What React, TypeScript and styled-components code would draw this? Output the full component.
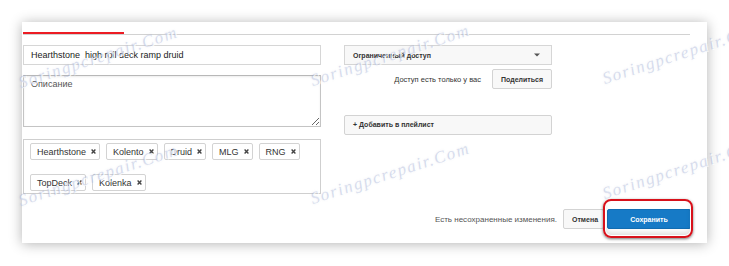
import React from "react";
import styled, { createGlobalStyle } from "styled-components";

const Global = createGlobalStyle`
  html, body { margin: 0; padding: 0; background: #fff; }
  body { font-family: "Liberation Sans", Arial, sans-serif; color: #222; }
  * { box-sizing: border-box; }
`;

const Page = styled.div`
  position: relative;
  width: 729px;
  height: 266px;
  padding: 22px 0 0 22px;
  overflow: hidden;
`;

const Card = styled.div`
  width: 685px;
  height: 221px;
  background: #fff;
  box-shadow: 0 1px 12px rgba(0, 0, 0, 0.3);
  padding: 10px 17px 0 1px;
  display: flex;
  flex-direction: column;
`;

const TabBar = styled.div`
  height: 3px;
  border-bottom: 1px solid #d2d2d2;
  display: flex;
`;

const TabIndicator = styled.div`
  width: 101px;
  height: 2px;
  background: #ec1c24;
`;

const Body = styled.div`
  margin-top: 10px;
  display: grid;
  grid-template-columns: 298px 208px;
  column-gap: 23px;
  align-items: start;
`;

const Column = styled.div`
  display: flex;
  flex-direction: column;
`;

const TitleInput = styled.input`
  height: 20px;
  width: 100%;
  border: 1px solid #d6d6d6;
  padding: 0 7px;
  font-family: inherit;
  font-size: 9px;
  color: #222;
  outline: none;
  background: #fff;
`;

const Description = styled.textarea`
  margin-top: 10px;
  height: 52px;
  width: 100%;
  border: 1px solid #c4c4c4;
  border-top-color: #b8b8b8;
  padding: 3px 7px;
  font-family: inherit;
  font-size: 9px;
  color: #222;
  outline: none;
  resize: vertical;
  box-shadow: inset 0 1px 2px rgba(0, 0, 0, 0.08);
  &::placeholder {
    color: #555;
  }
`;

const TagBox = styled.div`
  margin-top: 12px;
  height: 55px;
  border: 1px solid #cfcfcf;
  padding: 3px 6px;
  display: flex;
  flex-wrap: wrap;
  align-content: flex-start;
  column-gap: 6px;
  row-gap: 14px;
`;

const Chip = styled.span`
  height: 17px;
  display: inline-flex;
  align-items: center;
  gap: 5px;
  padding: 0 3px 0 6px;
  border: 1px solid #d3d3d3;
  border-radius: 2px;
  background: #fff;
  font-size: 9px;
  color: #333;
`;

const Select = styled.div`
  height: 20px;
  border: 1px solid #d6d6d6;
  background: #f8f8f8;
  padding: 0 11px 0 8px;
  display: flex;
  align-items: center;
  justify-content: space-between;
  font-size: 7px;
  font-weight: bold;
  color: #333;
`;

const ShareRow = styled.div`
  margin-top: 4px;
  display: flex;
  justify-content: flex-end;
  align-items: center;
  gap: 11px;
`;

const Note = styled.span<{ $size?: number }>`
  font-size: ${(p) => p.$size ?? 7.5}px;
  color: ${(p) => (p.$size ? "#555" : "#333")};
`;

const Button = styled.button<{ $w?: number; $primary?: boolean }>`
  height: 20px;
  width: ${(p) => (p.$w ? `${p.$w}px` : "100%")};
  padding: 0 8px;
  border: 1px solid ${(p) => (p.$primary ? "#126db3" : "#d3d3d3")};
  background: ${(p) => (p.$primary ? "#167ac6" : "#f8f8f8")};
  color: ${(p) => (p.$primary ? "#fff" : "#333")};
  font-family: inherit;
  font-size: 7px;
  font-weight: bold;
  border-radius: 2px;
  text-align: ${(p) => (p.$w ? "center" : "left")};
  cursor: pointer;
`;

const PlaylistWrap = styled.div`
  margin-top: 24px;
`;

const Footer = styled.div`
  margin-top: 15px;
  margin-right: -1px;
  display: flex;
  justify-content: flex-end;
  align-items: center;
`;

const FooterNote = styled(Note)`
  margin-right: 6px;
`;

const SaveWrap = styled.div`
  position: relative;
  margin-left: 3px;
  display: flex;
  &::after {
    content: "";
    position: absolute;
    top: -10px;
    bottom: -9px;
    left: -4px;
    right: -2px;
    border: 2.5px solid #d8111b;
    border-radius: 8px;
    box-shadow: 0 1px 3px rgba(0, 0, 0, 0.55), inset 0 0 0 1px #fff,
      inset 0 -4px 5px rgba(0, 0, 0, 0.12);
    pointer-events: none;
  }
`;

const Watermark = styled.span<{ $x: number; $y: number }>`
  position: absolute;
  left: ${(p) => p.$x}px;
  top: ${(p) => p.$y - 18}px;
  height: 18px;
  line-height: 18px;
  transform: rotate(-18deg);
  transform-origin: left bottom;
  font-family: "Liberation Serif", "Times New Roman", serif;
  font-style: italic;
  font-size: 17px;
  letter-spacing: 1.6px;
  color: rgba(150, 165, 210, 0.32);
  text-shadow: 1px 1px 0 rgba(255, 255, 255, 0.8), 0 0 2px rgba(160, 170, 200, 0.25);
  white-space: nowrap;
  pointer-events: none;
`;

const Arrow = () => (
  <svg width="6" height="4" viewBox="0 0 6 4">
    <path d="M0 0.5 L6 0.5 L3 3.5 Z" fill="#555" />
  </svg>
);

const Cross = () => (
  <svg width="5" height="5" viewBox="0 0 5 5">
    <path d="M0.6 0.6 L4.4 4.4 M4.4 0.6 L0.6 4.4" stroke="#444" strokeWidth="1.4" />
  </svg>
);

const tags = ["Hearthstone", "Kolento", "Druid", "MLG", "RNG", "TopDeck", "Kolenka"];

const marks = [
  [22, 92],
  [314, 90],
  [606, 88],
  [22, 210],
  [314, 208],
  [606, 203],
];

export default function App() {
  return (
    <>
      <Global />
      <Page>
        <Card>
          <TabBar>
            <TabIndicator />
          </TabBar>
          <Body>
            <Column>
              <TitleInput readOnly value="Hearthstone  high roll deck ramp druid" />
              <Description placeholder="Описание" />
              <TagBox>
                {tags.map((t) => (
                  <Chip key={t}>
                    {t}
                    <Cross />
                  </Chip>
                ))}
              </TagBox>
            </Column>
            <Column>
              <Select>
                <span>Ограниченный доступ</span>
                <Arrow />
              </Select>
              <ShareRow>
                <Note>Доступ есть только у вас</Note>
                <Button $w={60}>Поделиться</Button>
              </ShareRow>
              <PlaylistWrap>
                <Button>+ Добавить в плейлист</Button>
              </PlaylistWrap>
            </Column>
          </Body>
          <Footer>
            <FooterNote $size={8}>Есть несохраненные изменения.</FooterNote>
            <Button $w={41}>Отмена</Button>
            <SaveWrap>
              <Button $w={84} $primary>
                Сохранить
              </Button>
            </SaveWrap>
          </Footer>
        </Card>
        {marks.map(([x, y], i) => (
          <Watermark key={i} $x={x} $y={y}>
            Soringpcrepair.Com
          </Watermark>
        ))}
      </Page>
    </>
  );
}
